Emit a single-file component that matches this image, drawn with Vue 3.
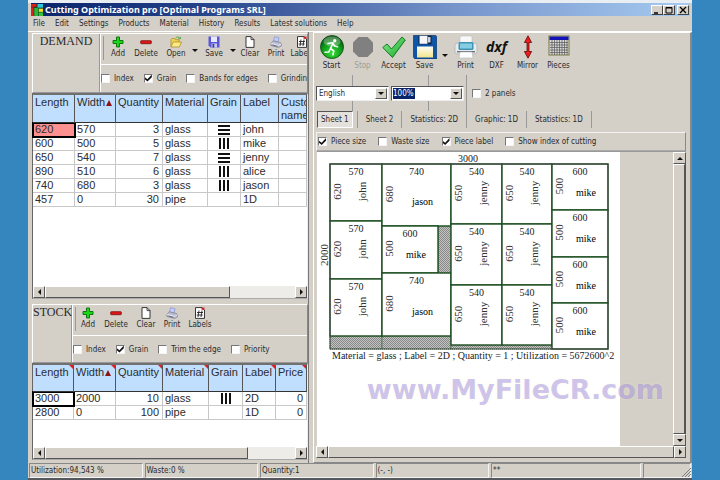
<script setup>
import { ref } from 'vue'

const menus = ['File', 'Edit', 'Settings', 'Products', 'Material', 'History', 'Results', 'Latest solutions', 'Help']

const demandTools = [
  { icon: 'add', label: 'Add', size: 'm' },
  { icon: 'delete', label: 'Delete', size: 'm' },
  { icon: 'open', label: 'Open', size: 'l', more: true },
  { icon: 'save', label: 'Save', size: 'l', more: true },
  { icon: 'clear', label: 'Clear', size: 'm' },
  { icon: 'print', label: 'Print', size: 's' },
  { icon: 'labels', label: 'Labels', size: 'm' }
]
const stockTools = [
  { icon: 'add', label: 'Add', size: 's' },
  { icon: 'delete', label: 'Delete', size: 'l' },
  { icon: 'clear', label: 'Clear', size: 'm' },
  { icon: 'print', label: 'Print', size: 's' },
  { icon: 'labels', label: 'Labels', size: 'l' }
]
const mainTools = [
  { icon: 'start', label: 'Start' },
  { icon: 'stop', label: 'Stop', off: true },
  { icon: 'accept', label: 'Accept' },
  { icon: 'disk', label: 'Save', more: true },
  { icon: 'printer', label: 'Print' },
  { mark: 'dxf', label: 'DXF' },
  { icon: 'mirror', label: 'Mirror' },
  { icon: 'pieces', label: 'Pieces' }
]

const demandChecks = ref([
  { label: 'Index', on: false },
  { label: 'Grain', on: true },
  { label: 'Bands for edges', on: false },
  { label: 'Grinding', on: false }
])
const stockChecks = ref([
  { label: 'Index', on: false },
  { label: 'Grain', on: true },
  { label: 'Trim the edge', on: false },
  { label: 'Priority', on: false }
])
const viewChecks = ref([
  { label: 'Piece size', on: true },
  { label: 'Waste size', on: false },
  { label: 'Piece label', on: true },
  { label: 'Show index of cutting', on: false }
])

const demandCols = ['Length', 'Width', 'Quantity', 'Material', 'Grain', 'Label', 'Custom name']
const demandRows = [
  ['620', '570', '3', 'glass', 'h', 'john', ''],
  ['600', '500', '5', 'glass', 'v', 'mike', ''],
  ['650', '540', '7', 'glass', 'h', 'jenny', ''],
  ['890', '510', '6', 'glass', 'v', 'alice', ''],
  ['740', '680', '3', 'glass', 'v', 'jason', ''],
  ['457', '0', '30', 'pipe', '', '1D', '']
]
const stockCols = ['Length', 'Width', 'Quantity', 'Material', 'Grain', 'Label', 'Price']
const stockRows = [
  ['3000', '2000', '10', 'glass', 'v', '2D', '0'],
  ['2800', '0', '100', 'pipe', '', '1D', '0']
]

const tabs = ['Sheet 1', 'Sheet 2', 'Statistics: 2D', 'Graphic: 1D', 'Statistics: 1D']
const activeTab = ref('Sheet 1')
const zoomLevel = ref('100%')
const twoPanels = ref(false)

// Pieces placed on the sheet: x, y, width, height, printed size, name, name turned or not
const pieces = [
  [13, 12, 52, 57, '570', '620', 'john', true],
  [13, 69, 52, 58, '570', '620', 'john', true],
  [13, 127, 52, 57, '570', '620', 'john', true],
  [65, 12, 69, 62, '740', '680', 'jason', false],
  [65, 74, 56, 47, '600', '500', 'mike', false],
  [65, 121, 69, 63, '740', '680', 'jason', false],
  [134, 12, 51, 60, '540', '650', 'jenny', true],
  [134, 72, 51, 61, '540', '650', 'jenny', true],
  [134, 133, 51, 60, '540', '650', 'jenny', true],
  [185, 12, 50, 60, '540', '650', 'jenny', true],
  [185, 72, 50, 61, '540', '650', 'jenny', true],
  [185, 133, 50, 60, '540', '650', 'jenny', true],
  [235, 12, 56, 46, '600', '500', 'mike', false],
  [235, 58, 56, 47, '600', '500', 'mike', false],
  [235, 105, 56, 46, '600', '500', 'mike', false],
  [235, 151, 56, 46, '600', '500', 'mike', false]
].map(([x, y, w, h, across, down, name, turned]) => ({ x, y, w, h, across, down, name, turned }))

const waste = [
  { x: 121, y: 74, w: 13, h: 47 },
  { x: 13, y: 184, w: 52, h: 13 },
  { x: 65, y: 184, w: 69, h: 13 },
  { x: 134, y: 193, w: 101, h: 4 }
]
</script>

<template>
  <div class="window">
    <svg class="sprites" aria-hidden="true">
      <defs>
        <radialGradient id="ball" cx=".5" cy=".75" r=".7">
          <stop offset="0" stop-color="#35e035" /><stop offset=".6" stop-color="#0f9a1c" /><stop offset="1" stop-color="#06520d" />
        </radialGradient>
        <linearGradient id="leaf" x1="0" y1="0" x2="1" y2="1">
          <stop offset="0" stop-color="#8ff08f" /><stop offset="1" stop-color="#12a52a" />
        </linearGradient>
        <linearGradient id="plate" x1="0" y1="0" x2="0" y2="1">
          <stop offset="0" stop-color="#fdfdf6" /><stop offset="1" stop-color="#f2e58a" />
        </linearGradient>
        <pattern id="hatch" width="2" height="2" patternUnits="userSpaceOnUse">
          <rect width="2" height="2" fill="#c4c4c4" /><path d="M-.5 .5L.5 -.5M0 2L2 0M1.5 2.5L2.5 1.5" stroke="#777" stroke-width=".8" />
        </pattern>
      </defs>
      <symbol id="i-add" viewBox="0 0 12 12"><path d="M4.5 1h3v3.5H11v3H7.500V11h-3V7.500H1v-3h3.500z" fill="#18d818" stroke="#0a6a0a" stroke-width=".9" /></symbol>
      <symbol id="i-delete" viewBox="0 0 12 12"><rect x=".7" y="4.700" width="10.600" height="3" rx=".6" fill="#e01818" stroke="#7a0c0c" stroke-width=".8" /></symbol>
      <symbol id="i-open" viewBox="0 0 12 12">
        <path d="M1 11V3.500L2 2.500h2.500l1 1.200H9V6" fill="#f1d35a" stroke="#a98710" stroke-width=".7" />
        <path d="M1 11l2.200-5H11.500L9.300 11z" fill="#fbe98a" stroke="#a98710" stroke-width=".7" />
        <path d="M5.500 2.200C7 .4 9 .6 10 2.400M10.700.9L10.200 3 8.300 2.300" fill="none" stroke="#4ea82e" stroke-width=".9" />
      </symbol>
      <symbol id="i-save" viewBox="0 0 12 12">
        <path d="M.5.5h11v11h-9l-2-2z" fill="#5a58d8" /><rect x="3" y=".5" width="6" height="5.500" fill="#e9e9fb" />
        <rect x="3.500" y="7.500" width="5.500" height="4" fill="#c9c9ee" /><rect x="4.500" y="8" width="1.700" height="3.500" fill="#38369c" />
      </symbol>
      <symbol id="i-clear" viewBox="0 0 12 12"><path d="M2 .6h5L10 3.600v7.800H2z" fill="#fff" stroke="#222" stroke-width=".9" /><path d="M7 .6v3h3" fill="none" stroke="#222" stroke-width=".8" /></symbol>
      <symbol id="i-print" viewBox="0 0 12 12">
        <path d="M3.500 5L4.500.7 9 1.700 8 6z" fill="#c4ccfb" stroke="#7d86cf" stroke-width=".6" />
        <path d="M1 7l2.500-2.200L10.500 6.500l1 1.500v1.800L8.500 11.500.8 9.500z" fill="#b9bcce" stroke="#70748a" stroke-width=".6" />
        <path d="M1 7.300l7.500 2L11.400 8" fill="none" stroke="#fff" stroke-width=".7" /><path d="M2.500 9l5 1.300" stroke="#555a75" stroke-width=".8" />
      </symbol>
      <symbol id="i-labels" viewBox="0 0 12 12">
        <path d="M1.500.6h6.500L10.500 3v8.400h-9z" fill="#fff" stroke="#222" stroke-width=".9" /><rect x="7.500" y=".6" width="3" height="2.200" fill="#c22" />
        <path d="M5 3.500L4 10M8 3.500L7 10M3 5.500h6M2.700 8h6" stroke="#222" stroke-width=".9" />
      </symbol>
      <symbol id="i-start" viewBox="0 0 24 24">
        <circle cx="12" cy="12" r="11.500" fill="url(#ball)" stroke="#0a4d10" stroke-width=".8" />
        <ellipse cx="12" cy="6.500" rx="8.500" ry="5" fill="#fff" opacity=".3" />
        <circle cx="14.700" cy="5.800" r="1.700" fill="#fff" />
        <path d="M8 8.500L12.700 7.700 14.500 11l3 .8M12.800 8.500L10.500 13.500l3.300 2.300-.8 4M10.500 13.500L8.800 17 5 17.300" fill="none" stroke="#fff" stroke-width="1.600" stroke-linejoin="round" stroke-linecap="round" />
      </symbol>
      <symbol id="i-stop" viewBox="0 0 24 24"><path d="M7.500 2h9L22 7.500v9L16.500 22h-9L2 16.500v-9z" fill="#808080" /></symbol>
      <symbol id="i-accept" viewBox="0 0 24 24"><path d="M.8 12.500L5 9l4.500 5L20 2l3.300 3L10.500 22.500z" fill="url(#leaf)" stroke="#14791f" stroke-width="1" stroke-linejoin="round" /></symbol>
      <symbol id="i-disk" viewBox="0 0 24 24">
        <path d="M.3.5h22.500l1 1.200V24H2L.3 22z" fill="#0f56a8" stroke="#08264f" stroke-width=".6" />
        <rect x="5.500" y=".8" width="13" height="8.500" fill="#0a1f3f" /><rect x="6.500" y=".8" width="8" height="8" fill="#f4f6f8" /><rect x="15" y="2" width="2.500" height="5.500" fill="#c9d4e2" />
        <rect x="4" y="11.500" width="16" height="11" fill="url(#plate)" />
      </symbol>
      <symbol id="i-printer" viewBox="0 0 24 24">
        <rect x="6" y="1" width="12" height="7" rx="1" fill="#f8f8f8" stroke="#b9bcc0" stroke-width=".6" />
        <rect x="1" y="8" width="22" height="11" rx="2.500" fill="#e8eaec" stroke="#a9adb2" stroke-width=".7" />
        <rect x="4.500" y="7" width="15" height="8" rx="1.500" fill="#3f94b6" /><rect x="6" y="8.500" width="12" height="5" fill="#85cde2" />
        <rect x="3" y="16" width="18" height="1.500" fill="#6d747b" /><path d="M6 17h12l1 6H5z" fill="#fff" stroke="#b3b7bc" stroke-width=".6" />
      </symbol>
      <symbol id="i-mirror" viewBox="0 0 24 24"><path d="M12 .8L15.600 7.500H13v9h2.600L12 23.200 8.400 16.500H11v-9H8.400z" fill="#ee1c1c" stroke="#5c0b0b" stroke-width=".8" /></symbol>
      <symbol id="i-pieces" viewBox="0 0 24 24">
        <rect x="2" y="1" width="20" height="19" fill="#d9d9d9" stroke="#77763a" stroke-width="1" /><rect x="2.500" y="1.500" width="19" height="3.500" fill="#1414b4" />
        <path d="M3 7.500h18M3 10h18M3 12.500h18M3 15h18M3 17.500h18M5 5v15M7.500 5v15M10 5v15M12.500 5v15M15 5v15M17.500 5v15M20 5v15" stroke="#555" stroke-width=".7" />
      </symbol>
    </svg>

    <header class="titlebar">
      <svg class="logo" viewBox="0 0 13 13" aria-hidden="true">
        <rect width="13" height="13" fill="#102a10" /><rect width="6" height="3" fill="#e21d1d" /><rect y="3.500" width="3" height="9.500" fill="#e21d1d" />
        <rect x="7" width="6" height="4" fill="#25c9d8" /><rect x="3.500" y="4" width="4.500" height="9" fill="#25b83a" /><rect x="8.500" y="5" width="4.500" height="3.500" fill="#f1e12d" /><rect x="8.500" y="9" width="4.500" height="4" fill="#35c03e" />
      </svg>
      <h1>Cutting Optimization pro [Optimal Programs SRL]</h1>
      <button class="cap" aria-label="Minimize"><svg viewBox="0 0 8 8"><path d="M1 7h4" stroke="#000" stroke-width="1.500" /></svg></button>
      <button class="cap" aria-label="Maximize"><svg viewBox="0 0 8 8"><path d="M1 1.500h6v5.500H1zM1 2h6" fill="none" stroke="#000" /></svg></button>
      <button class="cap close" aria-label="Close"><svg viewBox="0 0 8 8"><path d="M1 1l6 6M7 1L1 7" stroke="#000" stroke-width="1.300" /></svg></button>
    </header>

    <nav class="menu"><button v-for="m in menus" :key="m">{{ m }}</button></nav>

    <main class="work">
      <section class="left">
        <div class="panel demand">
          <h2>DEMAND</h2>
          <div class="side">
            <div class="tools">
              <template v-for="t in demandTools" :key="t.label">
                <button class="tool" :class="t.size"><svg><use :href="'#i-' + t.icon" /></svg>{{ t.label }}</button>
                <button v-if="t.more" class="drop" :aria-label="t.label + ' options'"><i class="tri down"></i></button>
              </template>
            </div>
            <div class="checks">
              <label v-for="c in demandChecks" :key="c.label"><input v-model="c.on" type="checkbox">{{ c.label }}</label>
            </div>
          </div>
        </div>

        <div class="gridbox grow">
          <table class="grid">
            <colgroup><col class="c42"><col class="c41"><col class="c47"><col class="c45"><col class="c33"><col class="c38"><col></colgroup>
            <thead><tr><th v-for="c in demandCols" :key="c">{{ c }}<i v-if="c === 'Width'" class="tri sort"></i></th></tr></thead>
            <tbody>
              <tr v-for="(r, ri) in demandRows" :key="ri">
                <td v-for="(v, ci) in r" :key="ci" :class="{ num: ci === 2, mid: ci === 4, cur: ri === 0 && ci === 0, pink: ri === 0 && ci === 0 }">
                  <i v-if="ci === 4 && v" class="grain" :class="v"></i><template v-else>{{ v }}</template>
                </td>
              </tr>
            </tbody>
          </table>
          <div class="hbar">
            <button aria-label="Scroll left"><i class="tri west"></i></button><div class="track"><div class="thumb t75"></div></div><button aria-label="Scroll right"><i class="tri east"></i></button>
          </div>
        </div>

        <div class="panel stock">
          <h2>STOCK</h2>
          <div class="side">
            <div class="tools">
              <button v-for="t in stockTools" :key="t.label" class="tool" :class="t.size"><svg><use :href="'#i-' + t.icon" /></svg>{{ t.label }}</button>
            </div>
            <div class="checks">
              <label v-for="c in stockChecks" :key="c.label"><input v-model="c.on" type="checkbox">{{ c.label }}</label>
            </div>
          </div>
        </div>

        <div class="gridbox short">
          <table class="grid">
            <colgroup><col class="c41"><col class="c42"><col class="c47"><col class="c46"><col class="c34"><col class="c33"><col></colgroup>
            <thead><tr><th v-for="c in stockCols" :key="c" :class="{ note: c !== 'Grain' }">{{ c }}<i v-if="c === 'Width'" class="tri sort"></i></th></tr></thead>
            <tbody>
              <tr v-for="(r, ri) in stockRows" :key="ri">
                <td v-for="(v, ci) in r" :key="ci" :class="{ num: ci === 2 || ci === 6, mid: ci === 4, cur: ri === 0 && ci === 0 }">
                  <i v-if="ci === 4 && v" class="grain" :class="v"></i><template v-else>{{ v }}</template>
                </td>
              </tr>
            </tbody>
          </table>
          <div class="hbar">
            <button aria-label="Scroll left"><i class="tri west"></i></button><div class="track"><div class="thumb t81"></div></div><button aria-label="Scroll right"><i class="tri east"></i></button>
          </div>
        </div>
      </section>

      <section class="right">
        <div class="maintools">
          <template v-for="t in mainTools" :key="t.label">
            <button class="big" :disabled="t.off">
              <svg v-if="t.icon"><use :href="'#i-' + t.icon" /></svg><b v-else class="mark">{{ t.mark }}</b>{{ t.label }}
            </button>
            <button v-if="t.more" class="drop wide" :aria-label="t.label + ' options'"><i class="tri down"></i></button>
          </template>
        </div>

        <div class="options">
          <div class="combo lang">
            <select aria-label="Language"><option>English</option></select>
            <span class="arrow"><i class="tri down"></i></span>
          </div>
          <div class="combo">
            <input v-model="zoomLevel" class="picked" type="text" aria-label="Zoom">
            <button class="arrow" aria-label="Zoom levels"><i class="tri down"></i></button>
          </div>
          <label class="panels"><input v-model="twoPanels" type="checkbox">2 panels</label>
        </div>

        <div class="tabs" role="tablist">
          <button v-for="t in tabs" :key="t" role="tab" :aria-selected="t === activeTab" @click="activeTab = t"><span>{{ t }}</span></button>
        </div>

        <div class="checks view">
          <label v-for="c in viewChecks" :key="c.label"><input v-model="c.on" type="checkbox">{{ c.label }}</label>
        </div>

        <div class="viewer">
          <div class="paper">
            <svg class="sheet" viewBox="0 0 303 216" role="img" aria-label="Cutting layout">
              <text x="151" y="10" class="dim">3000</text>
              <text transform="translate(11 103) rotate(-90)" class="side-dim">2000</text>
              <g v-for="(w, i) in waste" :key="'w' + i">
                <rect :x="w.x" :y="w.y" :width="w.w" :height="w.h" fill="url(#hatch)" class="waste" />
              </g>
              <g v-for="(p, i) in pieces" :key="'p' + i">
                <rect :x="p.x" :y="p.y" :width="p.w" :height="p.h" class="piece" />
                <text :x="p.x + p.w / 2" :y="p.y + 11" class="dim">{{ p.across }}</text>
                <text :transform="`translate(${p.x + 11} ${p.y + p.h / 2 - 1}) rotate(-90)`" class="side-dim">{{ p.down }}</text>
                <text v-if="p.turned" :transform="`translate(${p.x + 36} ${p.y + p.h / 2 - 1}) rotate(-90)`" class="side-dim">{{ p.name }}</text>
                <text v-else :x="p.x + p.w / 2 + 6" :y="p.y + p.h * 0.6 + 4" class="dim name">{{ p.name }}</text>
              </g>
              <rect x="13" y="12" width="278" height="185" class="edge" />
              <text x="15" y="207" class="caption">Material = glass ; Label = 2D ; Quantity = 1 ; Utilization = 5672600^2</text>
            </svg>
          </div>
          <div class="rest"></div>
          <div class="vbar">
            <button aria-label="Scroll up"><i class="tri north"></i></button><div class="track"><div class="thumb full"></div></div><button aria-label="Scroll down"><i class="tri down"></i></button>
          </div>
          <div class="watermark">www.MyFileCR.com</div>
        </div>
        <div class="hbar outer">
          <button aria-label="Scroll left"><i class="tri west"></i></button><div class="track"><div class="thumb full"></div></div><button aria-label="Scroll right"><i class="tri east"></i></button>
        </div>
      </section>
    </main>

    <footer class="status">
      <span>Utilization:94,543 %</span><span>Waste:0 %</span><span>Quantity:1</span><span>(-, -)</span><span class="broad">**</span><span class="last"></span>
      <svg class="grip" viewBox="0 0 10 10" aria-hidden="true"><path d="M1 10L10 1M4 10l6-6M7 10l3-3" stroke="#808080" /></svg>
    </footer>
  </div>
</template>

<style>
body { background: #3585bf; }
</style>

<style scoped>
* { box-sizing: border-box; }
button, input, select { font: inherit; color: inherit; margin: 0; padding: 0; border: 0; background: none; border-radius: 0; }
.window {
  margin: 0 28px; height: 100vh; display: flex; flex-direction: column;
  background: #d4d0c8; color: #2a2a2a; border-top: 3px solid #e9eef2; border-bottom: 2px solid #55585c;
  font: 8px/11px "DejaVu Sans Condensed", "DejaVu Sans", sans-serif;
}
.sprites { position: absolute; width: 0; height: 0; }

.titlebar { display: flex; align-items: center; height: 13px; margin: 0 2px 0 3px; background: linear-gradient(90deg, #0a246a, #24428a 25%, #7796cc 65%, #a6caf0); }
.logo { width: 12px; height: 12px; margin-right: 2px; }
.titlebar h1 { flex: 1; margin: 0; color: #fff; font: bold 9px/13px "Noto Sans", sans-serif; }
.cap { width: 12px; height: 10px; background: #d4d0c8; border: 1px solid; border-color: #fff #404040 #404040 #fff; display: grid; place-items: center; }
.cap svg { width: 8px; height: 8px; }
.close { margin: 0 1px 0 2px; }

.menu { display: flex; gap: 10px; height: 15px; padding-left: 5px; line-height: 15px; }

.work { flex: 1; min-height: 0; display: flex; border-top: 1px solid #fff; }
.left { width: 281px; padding: 1px 0 3px 4px; display: flex; flex-direction: column; border-right: 1px solid #777; overflow: hidden; }
.panel { display: flex; border: 1px solid #fff; border-bottom-color: #999; border-right-color: #888; overflow: hidden; }
.demand { height: 60px; }
.stock { height: 59px; margin-top: 5px; }
.panel h2 { margin: 0; font: 12px/15px "Liberation Serif", "Times New Roman", serif; text-align: center; border-right: 1px solid #999; flex: none; }
.demand h2 { width: 67px; }
.stock h2 { width: 39px; }
.side { flex: 1; min-width: 0; border-left: 1px solid #fff; overflow: hidden; }
.tools { display: flex; height: 31px; padding: 2px 0 0 2px; border-bottom: 1px solid #fff; }
.tools::before { content: ""; width: 1px; height: 24px; background: #999; flex: none; }
.tool { display: flex; flex-direction: column; align-items: center; flex: none; line-height: 12px; }
.tool svg { width: 12px; height: 12px; }
.s { width: 24px; }
.m { width: 28px; }
.l { width: 32px; }
.drop { width: 6px; display: grid; place-items: center; flex: none; }
.checks { display: flex; align-items: center; gap: 10px; height: 26px; white-space: nowrap; }
label { display: flex; align-items: center; gap: 4px; flex: none; }
input[type="checkbox"] { appearance: none; width: 9px; height: 9px; background: #fff; border: 1px solid; border-color: #777 #f4f4f4 #f4f4f4 #777; flex: none; }
input[type="checkbox"]:checked::before { content: ""; display: block; width: 7px; height: 7px; background: #111; clip-path: polygon(0 38%, 38% 68%, 100% 0, 100% 38%, 38% 100%, 0 68%); }

.tri { display: inline-block; width: 0; height: 0; border: 0 solid transparent; }
.tri.down { border-width: 3px 3px 0; border-top-color: #111; }
.tri.north { border-width: 0 3px 3px; border-bottom-color: #111; }
.tri.west { border-width: 3px 3px 3px 0; border-right-color: #111; }
.tri.east { border-width: 3px 0 3px 3px; border-left-color: #111; }
.tri.sort { border-width: 0 3px 6px; border-bottom-color: #8e1414; margin-left: 1px; }

.gridbox { display: flex; flex-direction: column; background: #fff; border: 1px solid #666; border-top: 2px solid #707070; border-right-color: #eee; border-bottom-color: #aaa; }
.grow { flex: 1; min-height: 0; }
.short { height: 97px; }
.grid { width: 100%; table-layout: fixed; border-collapse: separate; border-spacing: 0; font: 11px/13px "Liberation Sans", Arial, sans-serif; color: #2c2c2c; }
.grid th { position: relative; height: 27px; padding: 1px 0 0 2px; background: #c0dfff; border-right: 1px solid #555; border-bottom: 1px solid #333; font-weight: normal; text-align: left; vertical-align: top; line-height: 13px; overflow: hidden; }
.grid th.note::after { content: ""; position: absolute; right: 0; top: 0; border: 0 solid transparent; border-width: 0 4px 4px 0; border-right-color: #e02020; }
.grid td { height: 14px; padding: 0 2px; border-right: 1px solid #c8c8c8; border-bottom: 1px solid #c8c8c8; white-space: nowrap; }
.grid td.num { text-align: right; padding-right: 3px; }
.grid td.mid { text-align: center; font-size: 0; }
.grid td.cur { outline: 2px solid #000; outline-offset: -1px; }
.grid td.pink { background: #ff9090; }
.c33 { width: 33px; } .c34 { width: 34px; } .c38 { width: 38px; } .c41 { width: 41px; } .c42 { width: 42px; } .c45 { width: 45px; } .c46 { width: 46px; } .c47 { width: 47px; }
.grain { display: inline-block; width: 12px; height: 11px; vertical-align: middle; }
.grain.h { background: linear-gradient(#111, #111) 0 1px / 100% 2px no-repeat, linear-gradient(#111, #111) 0 5px / 100% 2px no-repeat, linear-gradient(#111, #111) 0 9px / 100% 2px no-repeat; }
.grain.v { background: linear-gradient(#111, #111) 1px 0 / 2px 100% no-repeat, linear-gradient(#111, #111) 5px 0 / 2px 100% no-repeat, linear-gradient(#111, #111) 9px 0 / 2px 100% no-repeat; }

.hbar { display: flex; height: 12px; margin-top: auto; background: #eeece8; }
.hbar button, .vbar button, .arrow { display: grid; place-items: center; width: 12px; height: 12px; flex: none; background: #d4d0c8; border: 1px solid; border-color: #fff #555 #555 #fff; }
.track { flex: 1; display: flex; }
.thumb { background: #d4d0c8; border: 1px solid; border-color: #fff #555 #555 #fff; }
.t75 { width: 74%; }
.t81 { width: 81%; }
.full { flex: 1; }

.right { flex: 1; min-width: 0; display: flex; flex-direction: column; margin-left: 4px; padding: 2px 4px 4px 2px; border: 1px solid #fff; border-right: 2px solid #888; border-bottom: 1px solid #888; }
.maintools { display: flex; height: 40px; }
.big { display: flex; flex-direction: column; align-items: center; width: 31px; line-height: 13px; }
.big svg { width: 24px; height: 24px; }
.mark { height: 24px; font: italic bold 14px/24px "Open Sans", sans-serif; color: #111; }
.big:disabled { color: #a09c94; }
.drop.wide { width: 10px; }
.options {
  display: flex; align-items: center; height: 36px;
  background: linear-gradient(#999, #999) 36px 0 / 1px 100% no-repeat, linear-gradient(#999, #999) 112px 0 / 1px 100% no-repeat;
}
.combo { display: flex; width: 73px; height: 15px; margin-right: 2px; padding: 1px; background: #fff; border: 1px solid; border-color: #555 #eee #eee #555; }
.combo select { appearance: none; flex: 1; min-width: 0; padding-left: 1px; }
.picked { width: 22px; margin-right: auto; background: #0a246a; color: #fff; }
.arrow { height: 11px; }
.panels { align-self: stretch; padding-left: 5px; border-left: 1px solid #999; }
.tabs { display: flex; align-items: stretch; height: 17px; gap: 4px; margin-left: 1px; }
.tabs button { display: flex; border-right: 1px solid #999; padding-right: 4px; }
.tabs span { display: flex; align-items: center; padding: 0 3px; border: 1px solid transparent; }
.tabs [aria-selected="true"] span { border-color: #555 #fff #fff #555; background: #e4e1dc; }
.view { gap: 12px; height: 19px; margin-top: 4px; padding-left: 1px; border: 1px solid #f4f4f4; border-right-color: #888; border-bottom-color: #aaa; }
.viewer { position: relative; flex: 1; min-height: 0; display: flex; margin-left: 1px; border-top: 1px solid #999; }
.paper { flex: 303; min-width: 0; background: #fff; overflow: hidden; }
.sheet { display: block; width: 100%; font-family: "Liberation Serif", "Times New Roman", serif; fill: #222; }
.rest { flex: 53; background: #d4d0c8; }
.vbar { width: 13px; display: flex; flex-direction: column; }
.vbar button { width: 13px; }
.vbar .track { border-right: 1px solid #555; }
.dim { font-size: 10px; text-anchor: middle; }
.name { fill: #000; }
.side-dim { font-size: 11px; text-anchor: middle; fill: #333; }
.piece { fill: #fff; stroke: #1a4d1f; stroke-width: 1.400px; }
.waste { stroke: #2f6b35; stroke-dasharray: 1 1; }
.edge { fill: none; stroke: #444; stroke-width: 1px; }
.caption { font-size: 10px; }
.watermark { position: absolute; right: 22px; bottom: 41px; font: bold 27px/30px "DejaVu Sans", Verdana, sans-serif; color: rgba(125, 110, 235, .4); text-shadow: 0 0 3px rgba(255, 238, 190, .4); white-space: nowrap; }
.outer { height: 12px; margin-top: 0; }

.status { display: flex; gap: 2px; height: 15px; padding: 0 1px; position: relative; line-height: 13px; }
.status span { flex: 114; min-width: 0; padding-left: 1px; border: 1px solid; border-color: #888 #f4f4f4 #f4f4f4 #888; }
.status .broad { flex: 152; }
.status .last { flex: 46; }
.grip { position: absolute; right: 1px; bottom: 1px; width: 10px; height: 10px; }
</style>
